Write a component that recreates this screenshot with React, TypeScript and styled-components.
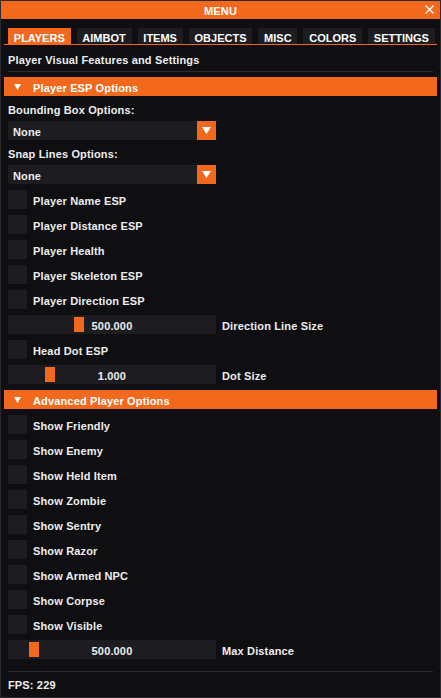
import React from "react";
import styled, { createGlobalStyle } from "styled-components";

const ORANGE = "#f2691e";
const TEXT = "#ededed";
const FIELD = "#1d1d21";
const LINE = "#2a2a2e";

const GlobalStyle = createGlobalStyle`
  * {
    box-sizing: border-box;
  }

  body {
    margin: 0;
    background-color: #0f0f12;
    font-family: "Liberation Sans", Arial, sans-serif;
  }
`;

const tabs = ["PLAYERS", "AIMBOT", "ITEMS", "OBJECTS", "MISC", "COLORS", "SETTINGS"];

const espToggles = [
  "Player Name ESP",
  "Player Distance ESP",
  "Player Health",
  "Player Skeleton ESP",
  "Player Direction ESP",
];

const advancedToggles = [
  "Show Friendly",
  "Show Enemy",
  "Show Held Item",
  "Show Zombie",
  "Show Sentry",
  "Show Razor",
  "Show Armed NPC",
  "Show Corpse",
  "Show Visible",
];

const DownTriangle = ({ width, height }: { width: number; height: number }) => (
  <svg width={width} height={height} viewBox={`0 0 ${width} ${height}`}>
    <polygon points={`0,0 ${width},0 ${width / 2},${height}`} fill="#ffffff" />
  </svg>
);

const Checkbox = ({ label }: { label: string }) => (
  <Row>
    <Box />
    <Label>{label}</Label>
  </Row>
);

const Combo = ({ value }: { value: string }) => (
  <ComboWrapper>
    <ComboValue>{value}</ComboValue>
    <ComboButton>
      <DownTriangle width={9} height={7} />
    </ComboButton>
  </ComboWrapper>
);

interface SliderProps {
  value: string;
  label: string;
  grab: number;
}

const Slider = ({ value, label, grab }: SliderProps) => (
  <Row>
    <Track>
      <Grab style={{ left: grab }} />
      <TrackValue>{value}</TrackValue>
    </Track>
    <Label>{label}</Label>
  </Row>
);

const Header = ({ title }: { title: string }) => (
  <HeaderBar>
    <HeaderArrow>
      <DownTriangle width={7} height={6} />
    </HeaderArrow>
    {title}
  </HeaderBar>
);

const App = () => {
  return (
    <>
      <GlobalStyle />
      <Window>
        <TitleBar>
          MENU
          <Close>
            <svg width="9" height="9" viewBox="0 0 9 9">
              <path d="M0.5 0.5 L8.5 8.5 M8.5 0.5 L0.5 8.5" stroke="#ffffff" strokeWidth="1.4" />
            </svg>
          </Close>
        </TitleBar>

        <Body>
          <TabBar>
            {tabs.map((tab) => (
              <Tab key={tab} $active={tab === "PLAYERS"}>
                {tab}
              </Tab>
            ))}
          </TabBar>

          <Subtitle>Player Visual Features and Settings</Subtitle>
          <Separator />

          <Items>
            <Header title="Player ESP Options" />
            <Caption>Bounding Box Options:</Caption>
            <Combo value="None" />
            <Caption>Snap Lines Options:</Caption>
            <Combo value="None" />
            {espToggles.map((item) => (
              <Checkbox key={item} label={item} />
            ))}
            <Slider value="500.000" label="Direction Line Size" grab={66} />
            <Checkbox label="Head Dot ESP" />
            <Slider value="1.000" label="Dot Size" grab={37} />

            <Header title="Advanced Player Options" />
            {advancedToggles.map((item) => (
              <Checkbox key={item} label={item} />
            ))}
            <Slider value="500.000" label="Max Distance" grab={21} />
          </Items>

          <Separator $top={12} />
          <Fps>FPS: 229</Fps>
        </Body>
      </Window>
    </>
  );
};

const Window = styled.div`
  display: flex;
  flex-direction: column;
  width: 441px;
  height: 698px;
  border: 1px solid #2b2b2e;
  background-color: #0f0f12;
  color: ${TEXT};
  font-size: 11px;
  font-weight: bold;
  letter-spacing: 0.15px;
`;

const TitleBar = styled.div`
  position: relative;
  height: 18px;
  padding-top: 1px;
  line-height: 18px;
  background-color: ${ORANGE};
  color: #ffffff;
  text-align: center;
`;

const Close = styled.span`
  position: absolute;
  right: 6px;
  top: 4px;
  display: flex;
`;

const Body = styled.div`
  display: flex;
  flex-direction: column;
  padding: 9px 7px 0;
`;

const TabBar = styled.div`
  display: flex;
  gap: 6px;
  margin: 0 -4px;
  padding: 0 4px;
  border-bottom: 1px solid ${ORANGE};
`;

const Tab = styled.div<{ $active?: boolean }>`
  height: 16px;
  padding: 2px 5.8px 0;
  line-height: 16px;
  letter-spacing: 0;
  background-color: ${({ $active }) => ($active ? ORANGE : FIELD)};
  color: #ffffff;
`;

const Subtitle = styled.div`
  margin-top: 9px;
  line-height: 13px;
`;

const Separator = styled.div<{ $top?: number }>`
  height: 1px;
  margin-top: ${({ $top }) => $top ?? 4}px;
  background-color: ${LINE};
`;

const Items = styled.div`
  display: flex;
  flex-direction: column;
  gap: 6px;
  margin-top: 5px;
`;

const HeaderBar = styled.div`
  display: flex;
  align-items: center;
  height: 19px;
  padding-top: 2px;
  margin: 0 -4px;
  background-color: ${ORANGE};
  color: #ffffff;
`;

const HeaderArrow = styled.span`
  display: flex;
  width: 29px;
  padding: 0 0 2px 10px;
`;

const Caption = styled.div`
  height: 13px;
  line-height: 17px;
`;

const ComboWrapper = styled.div`
  display: flex;
  width: 208px;
  height: 19px;
  background-color: ${FIELD};
`;

const ComboValue = styled.div`
  flex: 1;
  padding: 2px 0 0 5px;
  line-height: 19px;
`;

const ComboButton = styled.div`
  display: flex;
  align-items: center;
  justify-content: center;
  width: 19px;
  height: 19px;
  background-color: ${ORANGE};
`;

const Row = styled.div`
  display: flex;
  align-items: flex-start;
  gap: 6px;
  height: 19px;
`;

const Box = styled.div`
  width: 19px;
  height: 19px;
  background-color: ${FIELD};
`;

const Label = styled.span`
  padding-top: 2px;
  line-height: 19px;
`;

const Track = styled.div`
  position: relative;
  width: 208px;
  height: 19px;
  background-color: ${FIELD};
`;

const Grab = styled.div`
  position: absolute;
  top: 2px;
  width: 10px;
  height: 15px;
  background-color: ${ORANGE};
`;

const TrackValue = styled.div`
  position: relative;
  padding-top: 2px;
  line-height: 19px;
  text-align: center;
`;

const Fps = styled.div`
  margin-top: 7px;
  line-height: 13px;
`;

export default App;
